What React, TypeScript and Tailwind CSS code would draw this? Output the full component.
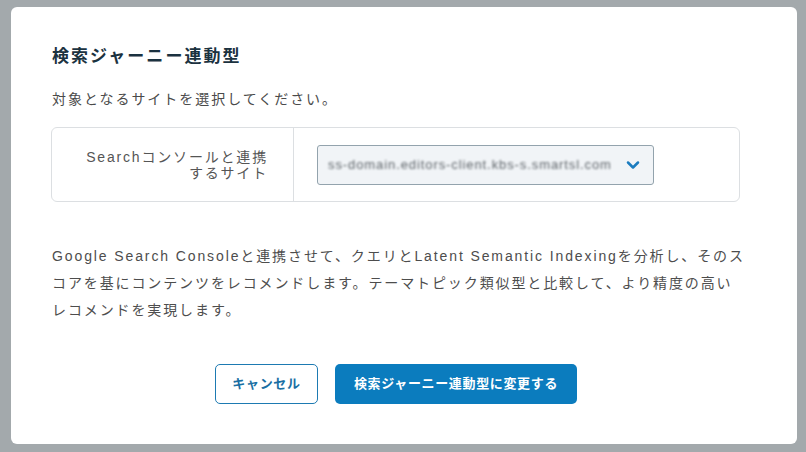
import { ChevronDown } from "lucide-react";

const font = "font-['Liberation_Sans','Noto_Sans_CJK_JP',sans-serif]";

const SiteSelectModal = () => {
  return (
    <div className={`w-[806px] h-[452px] bg-[#a3a9ac] pl-[11px] pt-[7px] overflow-hidden ${font}`}>
      <div className="w-[786px] h-[437px] bg-white rounded-[6px] px-[40px] pt-[39px]">
        <h2 className="text-[17px] leading-[22px] font-bold text-[#1b3240] tracking-[0.12em] pl-[1px]">
          検索ジャーニー連動型
        </h2>
        <p className="mt-[21px] text-[14px] leading-[20px] text-[#4a4a4a] tracking-[0.14em] pl-[1px]">
          対象となるサイトを選択してください。
        </p>

        <div className="mt-[18px] w-[689px] h-[75px] flex border border-[#dcdfe2] rounded-[6px]">
          <div className="w-[242px] flex items-center justify-end pr-[25px] border-r border-[#dcdfe2]">
            <p className="text-right text-[14px] leading-[16px] text-[#555] tracking-[0.13em]">
              Searchコンソールと連携
              <br />
              するサイト
            </p>
          </div>
          <div className="flex items-center pl-[23px]">
            <div className="w-[337px] h-[40px] flex items-center justify-between bg-[#f1f4f7] border-[1.5px] border-[#93a3ad] rounded-[3px] pl-[10px] pr-[10px]">
              <span className="text-[13px] text-[#5f656a] blur-[1px] tracking-[0.07em] whitespace-nowrap overflow-hidden">
                ss-domain.editors-client.kbs-s.smartsl.com
              </span>
              <ChevronDown size={20} strokeWidth={3} className="shrink-0 text-[#1b7cbf]" />
            </div>
          </div>
        </div>

        <p className="mt-[41px] text-[14px] leading-[27px] text-[#4d4d4d] tracking-[0.135em] whitespace-nowrap pl-[1px]">
          Google Search Consoleと連携させて、クエリとLatent Semantic Indexingを分析し、そのス
          <br />
          コアを基にコンテンツをレコメンドします。テーマトピック類似型と比較して、より精度の高い
          <br />
          レコメンドを実現します。
        </p>

        <div className="mt-[40px] flex gap-[17px] pl-[164px]">
          <button className="w-[103px] h-[40px] rounded-[5px] border border-[#1d7ab2] bg-white text-[13px] font-bold text-[#1a6fa3] tracking-[0.05em]">
            キャンセル
          </button>
          <button className="w-[242px] h-[40px] rounded-[5px] bg-[#0b7cbe] text-[13px] font-bold text-white tracking-[0.05em]">
            検索ジャーニー連動型に変更する
          </button>
        </div>
      </div>
    </div>
  );
};

export default function App() {
  return <SiteSelectModal />;
}
